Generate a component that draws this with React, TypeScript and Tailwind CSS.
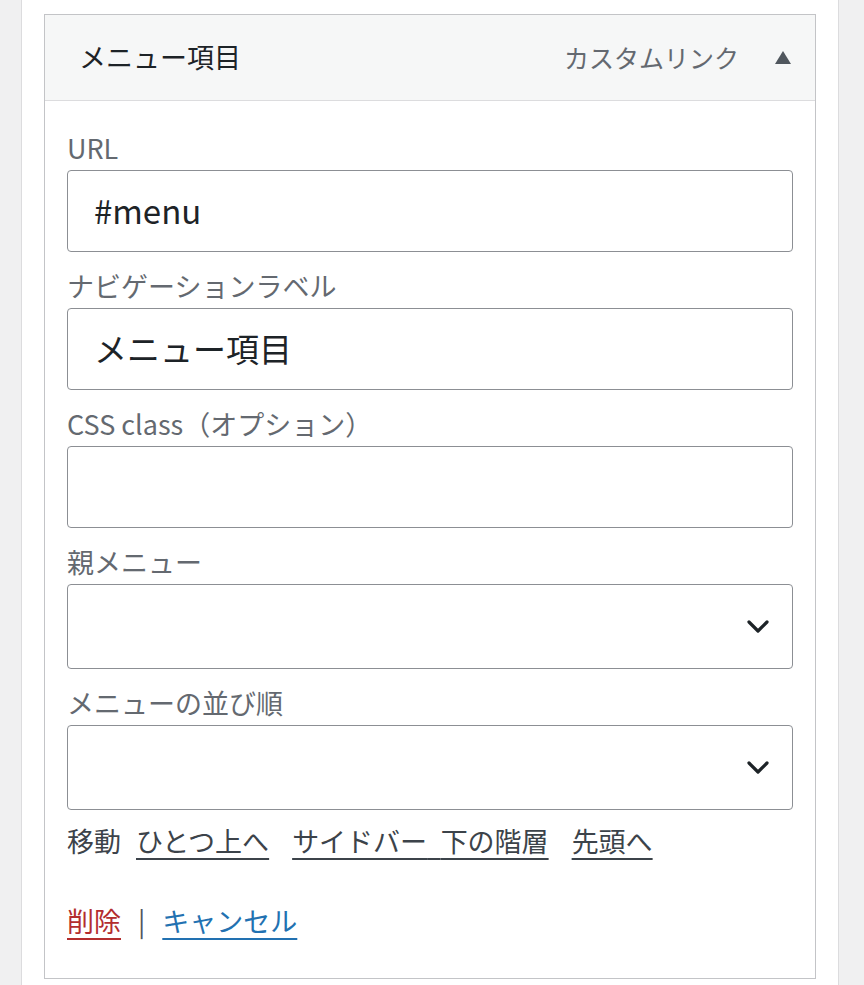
import React from "react";

const FONT = "font-['Noto_Sans_CJK_JP','Noto_Sans',sans-serif]";

function Chevron() {
  return (
    <svg width="22" height="13" viewBox="0 0 22 13" fill="none" className="shrink-0">
      <path d="M2 2l9 9 9-9" stroke="#1d2327" strokeWidth="3.2" strokeLinecap="round" strokeLinejoin="round" />
    </svg>
  );
}

function FieldLabel({ children }: { children: React.ReactNode }) {
  return <label className="block text-[27px] leading-[36px] text-[#646970] mb-[4px]">{children}</label>;
}

function Field({ label, children }: { label: string; children: React.ReactNode }) {
  return (
    <div className="mb-[16px]">
      <FieldLabel>{label}</FieldLabel>
      {children}
    </div>
  );
}

function TextBox({ value }: { value?: string }) {
  return (
    <div className="h-[82px] border border-[#8c8f94] rounded-[4px] bg-white flex items-center pl-[26px] text-[33px] text-[#1d2327]">
      {value}
    </div>
  );
}

function SelectBox() {
  return (
    <div className="h-[85px] border border-[#8c8f94] rounded-[4px] bg-white flex items-center justify-end pr-[23px]">
      <Chevron />
    </div>
  );
}

const link = "underline underline-offset-[6px] decoration-2";

export default function App() {
  return (
    <div className={`min-h-[985px] bg-[#f0f0f1] ${FONT}`}>
      <div className="ml-[21px] w-[818px] min-h-[985px] bg-white border-x border-[#dcdcde] px-[22px] pt-[14px]">
        <div className="border border-[#c3c4c7]">
          {/* item header */}
          <div className="h-[86px] bg-[#f6f7f7] border-b border-[#dcdcde] flex items-center pl-[34px] pr-[24px]">
            <span className="text-[27px] text-[#1d2327]">メニュー項目</span>
            <span className="ml-auto text-[25px] text-[#646970]">カスタムリンク</span>
            <svg width="16" height="13" viewBox="0 0 16 13" className="ml-[36px]">
              <path d="M8 0L16 13H0z" fill="#50575e" />
            </svg>
          </div>

          {/* settings */}
          <div className="px-[22px] pt-[29px] pb-[39px]">
            <Field label="URL">
              <TextBox value="#menu" />
            </Field>
            <Field label="ナビゲーションラベル">
              <TextBox value="メニュー項目" />
            </Field>
            <Field label="CSS class（オプション）">
              <TextBox />
            </Field>
            <Field label="親メニュー">
              <SelectBox />
            </Field>
            <div className="mb-[13px]">
              <FieldLabel>メニューの並び順</FieldLabel>
              <SelectBox />
            </div>

            <div className="flex items-center text-[27px] leading-[36px] text-[#3c434a]">
              <span className="mr-[15px]">移動</span>
              <a className={`${link} mr-[23px]`}>ひとつ上へ</a>
              <a className={`${link} mr-[23px]`}>サイドバー{"\u2002"}下の階層</a>
              <a className={link}>先頭へ</a>
            </div>

            <div className="mt-[44px] flex items-center text-[27px] leading-[36px]">
              <a className={`${link} text-[#b32d2e]`}>削除</a>
              <span className="mx-[17px] text-[#50575e]">|</span>
              <a className={`${link} text-[#2271b1]`}>キャンセル</a>
            </div>
          </div>
        </div>
      </div>
    </div>
  );
}
